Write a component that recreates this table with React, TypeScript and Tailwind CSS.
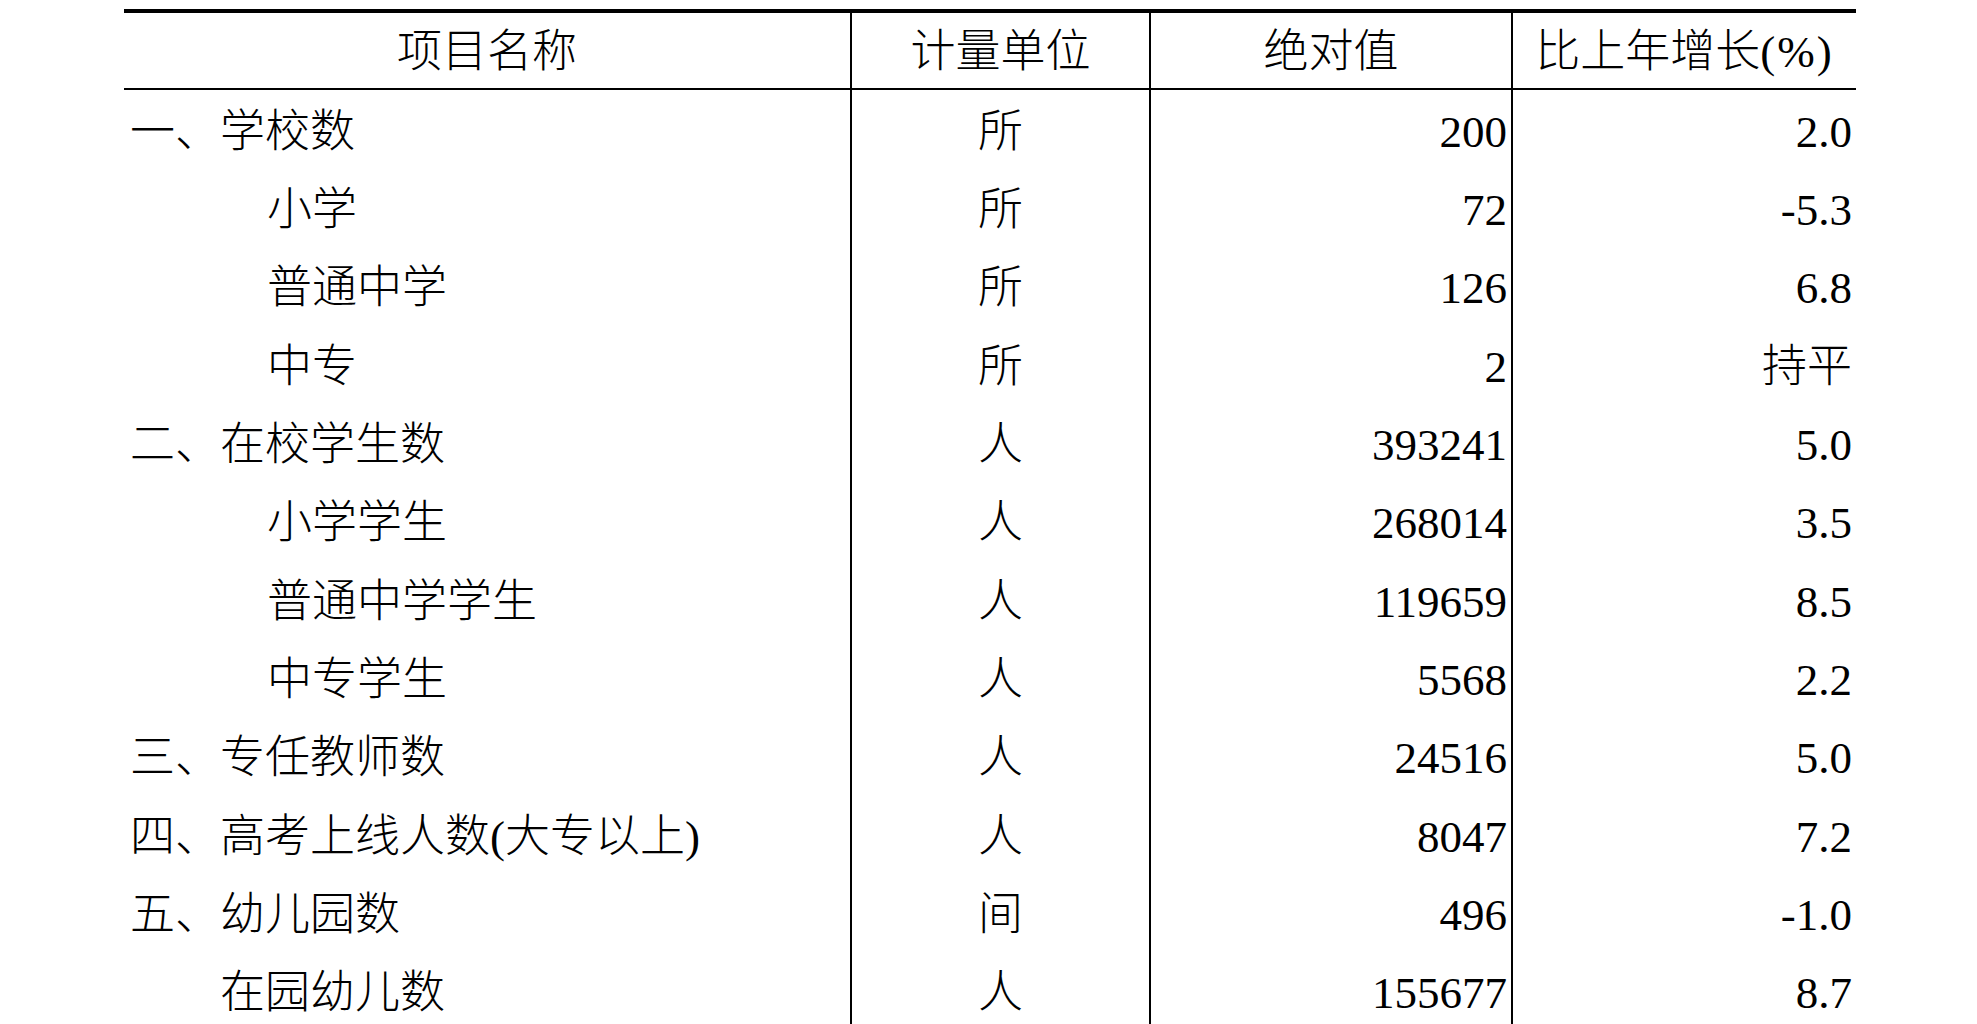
const rows = [
  { name: '一、学校数', indent: 0, unit: '所', value: '200', change: '2.0' },
  { name: '小学', indent: 1, unit: '所', value: '72', change: '-5.3' },
  { name: '普通中学', indent: 1, unit: '所', value: '126', change: '6.8' },
  { name: '中专', indent: 1, unit: '所', value: '2', change: '持平' },
  { name: '二、在校学生数', indent: 0, unit: '人', value: '393241', change: '5.0' },
  { name: '小学学生', indent: 1, unit: '人', value: '268014', change: '3.5' },
  { name: '普通中学学生', indent: 1, unit: '人', value: '119659', change: '8.5' },
  { name: '中专学生', indent: 1, unit: '人', value: '5568', change: '2.2' },
  { name: '三、专任教师数', indent: 0, unit: '人', value: '24516', change: '5.0' },
  { name: '四、高考上线人数(大专以上)', indent: 0, unit: '人', value: '8047', change: '7.2' },
  { name: '五、幼儿园数', indent: 0, unit: '间', value: '496', change: '-1.0' },
  { name: '在园幼儿数', indent: 2, unit: '人', value: '155677', change: '8.7' },
];

const indentClass = ['pl-[6px]', 'pl-[143px]', 'pl-[96px]'];

export default function App() {
  return (
    <div
      className="h-[1024px] w-[1977px] overflow-hidden bg-white text-black"
      style={{ fontFamily: '"Liberation Serif", "Noto Sans CJK SC", serif' }}
    >
      <div className="ml-[124px] mt-[9px] w-[1732px] text-[45px] font-light">
        <div className="h-[4px] bg-black" />
        <div className="grid grid-cols-[726px_299px_362px_345px] border-b-2 border-black">
          <div className="flex h-[75px] items-center justify-center pt-[5px]">项目名称</div>
          <div className="flex h-[75px] items-center justify-center border-l-2 border-black pt-[5px]">计量单位</div>
          <div className="flex h-[75px] items-center justify-center border-l-2 border-black pt-[5px]">绝对值</div>
          <div className="flex h-[75px] items-center justify-center border-l-2 border-black pt-[5px]">
            比上年增长<span className="tracking-[2px]">(%)</span>
          </div>
        </div>
        <div className="grid grid-cols-[726px_299px_362px_345px]">
          {rows.map((r) => (
            <div key={r.name} className="contents">
              <div className={`flex h-[78.3px] items-center whitespace-nowrap pt-[7px] ${indentClass[r.indent]}`}>
                {r.name}
              </div>
              <div className="flex h-[78.3px] items-center justify-center border-l-2 border-black pt-[7px]">
                {r.unit}
              </div>
              <div className="flex h-[78.3px] items-center justify-end border-l-2 border-black pr-[4px] pt-[7px]">
                {r.value}
              </div>
              <div className="flex h-[78.3px] items-center justify-end border-l-2 border-black pr-[4px] pt-[7px]">
                {r.change}
              </div>
            </div>
          ))}
        </div>
      </div>
    </div>
  );
}
